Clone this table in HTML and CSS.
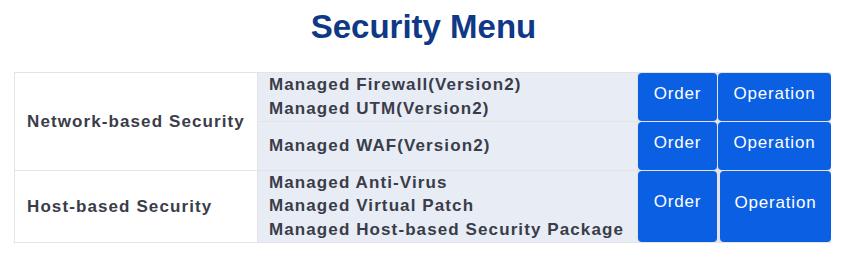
FILE: index.html
```html
<html>

<head>
  <link rel="stylesheet" href="styles.css">
</head>

<body>
  <div class="page">
    <h1 class="title">Security Menu</h1>
    <div class="menu">
      <div class="category cat-network">Network-based Security</div>
      <div class="services">
        <div>Managed Firewall(Version2)</div>
        <div>Managed UTM(Version2)</div>
      </div>
      <a class="btn" href="#">Order</a>
      <a class="btn" href="#">Operation</a>

      <div class="services">
        <div>Managed WAF(Version2)</div>
      </div>
      <a class="btn" href="#">Order</a>
      <a class="btn" href="#">Operation</a>

      <div class="category">Host-based Security</div>
      <div class="services">
        <div>Managed Anti-Virus</div>
        <div>Managed Virtual Patch</div>
        <div>Managed Host-based Security Package</div>
      </div>
      <a class="btn btn-tall" href="#">Order</a>
      <a class="btn btn-tall btn-shift" href="#">Operation</a>
    </div>
  </div>
</body>

</html>
```

FILE: styles.css
```css
:root {
  --border: #e4e4e6;
  --text: #3a3d49;
  --blue: #0a5fe3;
}

* {
  margin: 0;
  padding: 0;
  box-sizing: border-box;
}

body {
  background: #fff;
  font-family: "Liberation Sans", Arial, sans-serif;
}

.page {
  padding: 8px 17px 0 14px;
}

.title {
  text-align: center;
  color: #0f3886;
  font-size: 33px;
  font-weight: 700;
  line-height: 38px;
  margin-bottom: 26px;
  padding-left: 2px;
}

.menu {
  width: 817px;
  display: grid;
  grid-template-columns: 242px 379px 79px 113px;
  grid-template-rows: 48px 48px 71px;
  gap: 1px;
  border: 1px solid var(--border);
  background: var(--border);
  color: var(--text);
  font-size: 17px;
  font-weight: 700;
  letter-spacing: 1.1px;
}

.category {
  display: flex;
  align-items: center;
  padding: 0 12px;
  background: #fff;
}

.cat-network {
  grid-row: span 2;
}

.services {
  display: flex;
  flex-direction: column;
  justify-content: center;
  background: #e8ecf5;
  padding: 0 11px 1px;
  line-height: 23.5px;
}

.btn {
  display: flex;
  align-items: center;
  justify-content: center;
  padding-bottom: 6px;
  border-radius: 4px;
  background: var(--blue);
  color: #fff;
  text-decoration: none;
  font-weight: 400;
  letter-spacing: 0.8px;
}

.btn-tall {
  padding-bottom: 9px;
}

.btn-shift {
  margin-left: 2px;
  padding-bottom: 7px;
}
```
